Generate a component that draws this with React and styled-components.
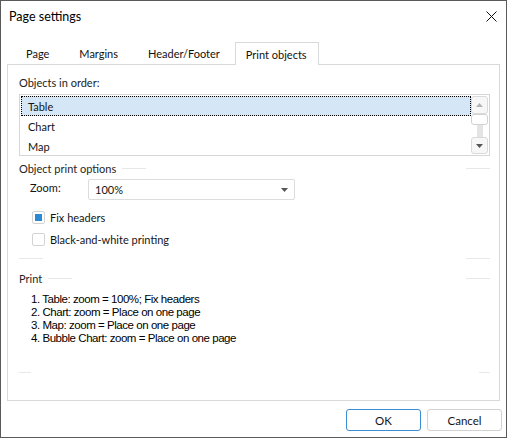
import React from 'react'
import styled, { createGlobalStyle } from 'styled-components'

const GlobalStyle = createGlobalStyle`
  html, body { margin: 0; padding: 0; background: #fff; }
  * { box-sizing: border-box; }
`

const Window = styled.div`
  width: 507px;
  height: 438px;
  border: 1px solid #5a5a5a;
  background: #fff;
  display: flex;
  flex-direction: column;
  font-family: Lato, "Segoe UI", sans-serif;
  font-size: 11px;
  color: #141414;
`

const TitleBar = styled.div`
  height: 31px;
  display: flex;
  align-items: center;
  justify-content: space-between;
  padding: 0 9px 0 8px;
`

const Title = styled.div`
  color: #000;
  font-size: 12.5px;
`

const CloseButton = styled.div`
  width: 12px;
  height: 12px;
  display: flex;
  align-items: center;
  justify-content: center;
`

const TabRow = styled.div`
  display: flex;
  height: 22px;
  margin-top: 10px;
  padding-left: 10px;
`

const Tab = styled.div`
  position: relative;
  z-index: 1;
  display: flex;
  align-items: center;
  height: ${p => (p.$active ? '23px' : '22px')};
  padding: 0 ${p => (p.$active ? '11px 0 10px' : '14px')};
  min-width: ${p => p.$min || 0}px;
  border: 1px solid ${p => (p.$active ? '#d9d9d9' : 'transparent')};
  border-bottom: none;
  background: #fff;
  color: #111;
`

const Panel = styled.div`
  margin: 0 6px;
  height: 337px;
  border: 1px solid #d9d9d9;
  padding: 9px 9px 0 11px;
  display: flex;
  flex-direction: column;
`

const FieldLabel = styled.div`
  line-height: 17px;
  margin-bottom: 3px;
  color: #222;
`

const ListBox = styled.div`
  height: 62px;
  border: 1px solid #d6d6d6;
  display: flex;
  overflow: hidden;
`

const Items = styled.div`
  flex: 1;
  padding: 1px 0 0 1px;
`

const Item = styled.div`
  height: 20px;
  display: flex;
  align-items: center;
  padding-left: 6px;
  border: 1px ${p => (p.$selected ? 'dotted #000' : 'solid transparent')};
  background: ${p => (p.$selected ? '#d5e7f6' : 'transparent')};
`

const ScrollBar = styled.div`
  width: 18px;
  padding: 1px 1px 1px 0;
  display: flex;
  flex-direction: column;
  align-items: center;
`

const ScrollButton = styled.div`
  width: 17px;
  height: ${p => p.$h}px;
  border: 1px solid #dadada;
  border-radius: 3px;
  background: #f7f7f7;
  display: flex;
  align-items: center;
  justify-content: center;
`

const Thumb = styled.div`
  width: 17px;
  height: 11px;
  border: 1px solid #d2d2d2;
  border-radius: 3px;
  background: #fff;
`

const Track = styled.div`
  flex: 1;
  width: 6px;
  background: #e4e4e4;
`

const GroupHead = styled.div`
  display: flex;
  align-items: center;
  height: 16px;
  margin-top: ${p => p.$mt}px;
  color: #262626;
`

const GroupFoot = styled.div`
  display: flex;
  align-items: center;
  height: 1px;
  margin-top: ${p => p.$mt}px;
`

const Rule = styled.div`
  width: ${p => p.$w}px;
  height: 1px;
  margin-left: ${p => p.$gap || 0}px;
  background: #e8e8e8;
`

const Spacer = styled.div`
  flex: 1;
`

const ZoomRow = styled.div`
  display: flex;
  align-items: center;
  height: 21px;
  margin-top: 3px;
  padding-left: 11px;
`

const ZoomLabel = styled.div`
  width: 58px;
  margin-top: -4px;
`

const Combo = styled.div`
  width: 207px;
  height: 21px;
  border: 1px solid #dcdcdc;
  border-radius: 2px;
  display: flex;
  align-items: center;
  justify-content: space-between;
  padding: 0 6px 0 6px;
`

const CheckRow = styled.div`
  display: flex;
  align-items: center;
  height: 22px;
  margin-top: ${p => p.$mt || 0}px;
  padding-left: 13px;
  gap: 5px;
`

const CheckBox = styled.div`
  width: 13px;
  height: 13px;
  border: 1px solid #d3d3d3;
  border-radius: 2px;
  display: flex;
  align-items: center;
  justify-content: center;
  &::after {
    content: '';
    display: ${p => (p.$checked ? 'block' : 'none')};
    width: 7px;
    height: 7px;
    background: #2a8ad6;
  }
`

const Summary = styled.div`
  margin-top: 7px;
  padding-left: 12px;
  font-family: "Liberation Sans", Arial, sans-serif;
  font-size: 11.5px;
  letter-spacing: -0.45px;
  line-height: 13px;
  color: #000;
`

const Footer = styled.div`
  display: flex;
  justify-content: flex-end;
  gap: 6px;
  margin-top: 8px;
  padding-right: 4px;
`

const Button = styled.div`
  width: 75px;
  height: 22px;
  border: 1px solid ${p => (p.$default ? '#3c8dd3' : '#d2d2d2')};
  border-radius: 3px;
  background: #fff;
  display: flex;
  align-items: center;
  justify-content: center;
  font-size: 11.5px;
`

const Arrow = ({ up, color }) => (
  <svg width="7" height="4" viewBox="0 0 7 4">
    <path d={up ? 'M0 4 L3.5 0 L7 4 Z' : 'M0 0 L7 0 L3.5 4 Z'} fill={color} />
  </svg>
)

const tabs = ['Page', 'Margins', 'Header/Footer', 'Print objects']
const objects = ['Table', 'Chart', 'Map']
const summary = [
  '1. Table: zoom = 100%; Fix headers',
  '2. Chart: zoom = Place on one page',
  '3. Map: zoom = Place on one page',
  '4. Bubble Chart: zoom = Place on one page',
]

export default function App() {
  return (
    <>
      <GlobalStyle />
      <Window>
        <TitleBar>
          <Title>Page settings</Title>
          <CloseButton>
            <svg width="11" height="11" viewBox="0 0 11 11">
              <path d="M0.5 0.5 L10.5 10.5 M10.5 0.5 L0.5 10.5" stroke="#111" strokeWidth="1" />
            </svg>
          </CloseButton>
        </TitleBar>

        <TabRow>
          {tabs.map((t, i) => (
            <Tab key={t} $active={t === 'Print objects'} $min={i === 0 ? 53 : 0}>{t}</Tab>
          ))}
        </TabRow>

        <Panel>
          <FieldLabel>Objects in order:</FieldLabel>
          <ListBox>
            <Items>
              {objects.map((o, i) => (
                <Item key={o} $selected={i === 0}>{o}</Item>
              ))}
            </Items>
            <ScrollBar>
              <ScrollButton $h={18}><Arrow up color="#b4b4b4" /></ScrollButton>
              <Thumb />
              <Track />
              <ScrollButton $h={17}><Arrow color="#555" /></ScrollButton>
            </ScrollBar>
          </ListBox>

          <GroupHead $mt={4}>
            Object print options
            <Rule $w={24} $gap={6} />
            <Spacer />
            <Rule $w={24} />
          </GroupHead>
          <ZoomRow>
            <ZoomLabel>Zoom:</ZoomLabel>
            <Combo>
              <span>100%</span>
              <Arrow color="#555" />
            </Combo>
          </ZoomRow>
          <CheckRow $mt={6}>
            <CheckBox $checked />
            Fix headers
          </CheckRow>
          <CheckRow>
            <CheckBox />
            Black-and-white printing
          </CheckRow>
          <GroupFoot $mt={8}>
            <Rule $w={24} />
            <Spacer />
            <Rule $w={24} />
          </GroupFoot>

          <GroupHead $mt={11}>
            Print
            <Rule $w={24} $gap={6} />
            <Spacer />
            <Rule $w={24} />
          </GroupHead>
          <Summary>
            {summary.map(s => (
              <div key={s}>{s}</div>
            ))}
          </Summary>
          <GroupFoot $mt={27}>
            <Rule $w={12} />
            <Spacer />
            <Rule $w={11} />
          </GroupFoot>
        </Panel>

        <Footer>
          <Button $default>OK</Button>
          <Button>Cancel</Button>
        </Footer>
      </Window>
    </>
  )
}
